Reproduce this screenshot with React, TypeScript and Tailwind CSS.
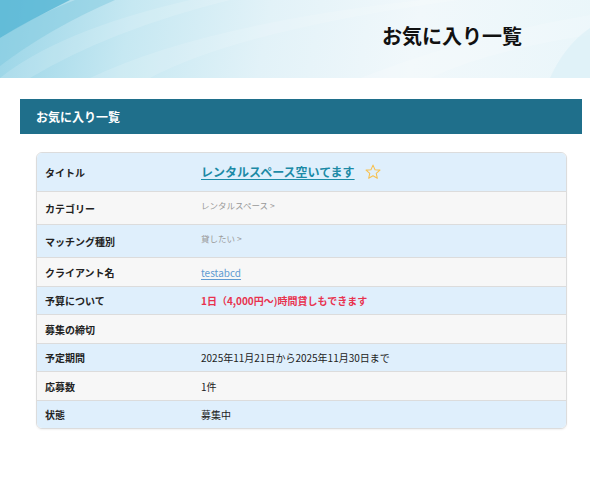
import React from "react";

function Star() {
  return (
    <svg width="18" height="18" viewBox="0 0 24 24" className="ml-[9px] mb-[1px]">
      <path
        d="M12 2.8l2.7 6.1 6.6.6-5 4.4 1.5 6.5L12 17l-5.8 3.4 1.5-6.5-5-4.4 6.6-.6z"
        fill="none"
        stroke="#f7c04f"
        strokeWidth="1.4"
        strokeLinejoin="round"
      />
    </svg>
  );
}

function Row({
  label,
  h,
  bg,
  children,
  top,
  last,
}: {
  label: string;
  h: string;
  bg: string;
  children?: React.ReactNode;
  top?: boolean;
  last?: boolean;
}) {
  return (
    <div className={`flex ${h} ${bg} ${last ? "" : "border-b border-[#dcdcdc]"}`}>
      <div className="w-[164px] shrink-0 pl-[8px] flex items-center text-[10px] font-bold text-[#222]">
        {label}
      </div>
      <div className={`flex-1 flex ${top ? "items-start pt-[7px]" : "items-center"}`}>{children}</div>
    </div>
  );
}

export default function App() {
  return (
    <div
      className="w-[590px] h-[492px] bg-white overflow-hidden"
      style={{ fontFamily: '"Noto Sans CJK JP", "Noto Sans", sans-serif' }}
    >
      {/* header */}
      <div className="relative h-[78px] overflow-hidden bg-[linear-gradient(100deg,#9ad5e7_0%,#c6e8f2_22%,#e2f2f8_45%,#f1f8fb_70%,#eaf6fa_100%)]">
        <svg className="absolute inset-0" width="590" height="78" viewBox="0 0 590 78" preserveAspectRatio="none">
          <path d="M0 0 L70 0 Q30 20 0 38 Z" fill="#4fb3d3" opacity="0.75" />
          <path d="M0 38 Q30 18 75 0 L115 0 Q50 28 0 66 Z" fill="#7fc9df" opacity="0.5" />
          <path d="M0 78 Q60 30 190 0 L230 0 Q110 30 30 78 Z" fill="#ffffff" opacity="0.15" />
          <path d="M90 78 Q200 25 420 0 L460 0 Q240 30 150 78 Z" fill="#ffffff" opacity="0.14" />
          <path d="M360 78 Q470 35 590 15 L590 35 Q490 50 430 78 Z" fill="#ffffff" opacity="0.18" />
          <path d="M550 78 Q565 45 590 28 L590 78 Z" fill="#d6edf5" opacity="0.5" />
        </svg>
        <div className="relative h-full flex items-center justify-end pr-[68px] pb-[6px]">
          <h1 className="text-[20px] font-bold text-[#111]">お気に入り一覧</h1>
        </div>
      </div>

      {/* section bar */}
      <div className="mt-[21px] ml-[20px] mr-[8px] h-[35px] bg-[#1f6f8b] flex items-center pl-[16px]">
        <span className="text-white text-[12px] font-bold">お気に入り一覧</span>
      </div>

      {/* card */}
      <div className="mt-[18px] ml-[36px] w-[531px] border border-[#dcdcdc] rounded-[6px] overflow-hidden shadow-[0_1px_2px_rgba(0,0,0,0.06)]">
        <Row label="タイトル" h="h-[39px]" bg="bg-[#dfeffc]">
          <a className="text-[12px] font-bold text-[#1c8aa6] underline underline-offset-[2px]">
            レンタルスペース空いてます
          </a>
          <Star />
        </Row>
        <Row label="カテゴリー" h="h-[33px]" bg="bg-[#f7f7f7]" top>
          <span className="text-[8.5px] text-[#999]">レンタルスペース&nbsp;&gt;</span>
        </Row>
        <Row label="マッチング種別" h="h-[33px]" bg="bg-[#dfeffc]" top>
          <span className="text-[8.5px] text-[#999]">貸したい&nbsp;&gt;</span>
        </Row>
        <Row label="クライアント名" h="h-[29px]" bg="bg-[#f7f7f7]">
          <a className="text-[10px] text-[#5f9bd2] underline underline-offset-[2px]">testabcd</a>
        </Row>
        <Row label="予算について" h="h-[28px]" bg="bg-[#dfeffc]">
          <span className="text-[10px] font-bold text-[#e8334f]">1日（4,000円〜)時間貸しもできます</span>
        </Row>
        <Row label="募集の締切" h="h-[29px]" bg="bg-[#f7f7f7]" />
        <Row label="予定期間" h="h-[28px]" bg="bg-[#dfeffc]">
          <span className="text-[10px] text-[#222]">2025年11月21日から2025年11月30日まで</span>
        </Row>
        <Row label="応募数" h="h-[29px]" bg="bg-[#f7f7f7]">
          <span className="text-[10px] text-[#222]">1件</span>
        </Row>
        <Row label="状態" h="h-[27px]" bg="bg-[#dfeffc]" last>
          <span className="text-[10px] text-[#222]">募集中</span>
        </Row>
      </div>
    </div>
  );
}
